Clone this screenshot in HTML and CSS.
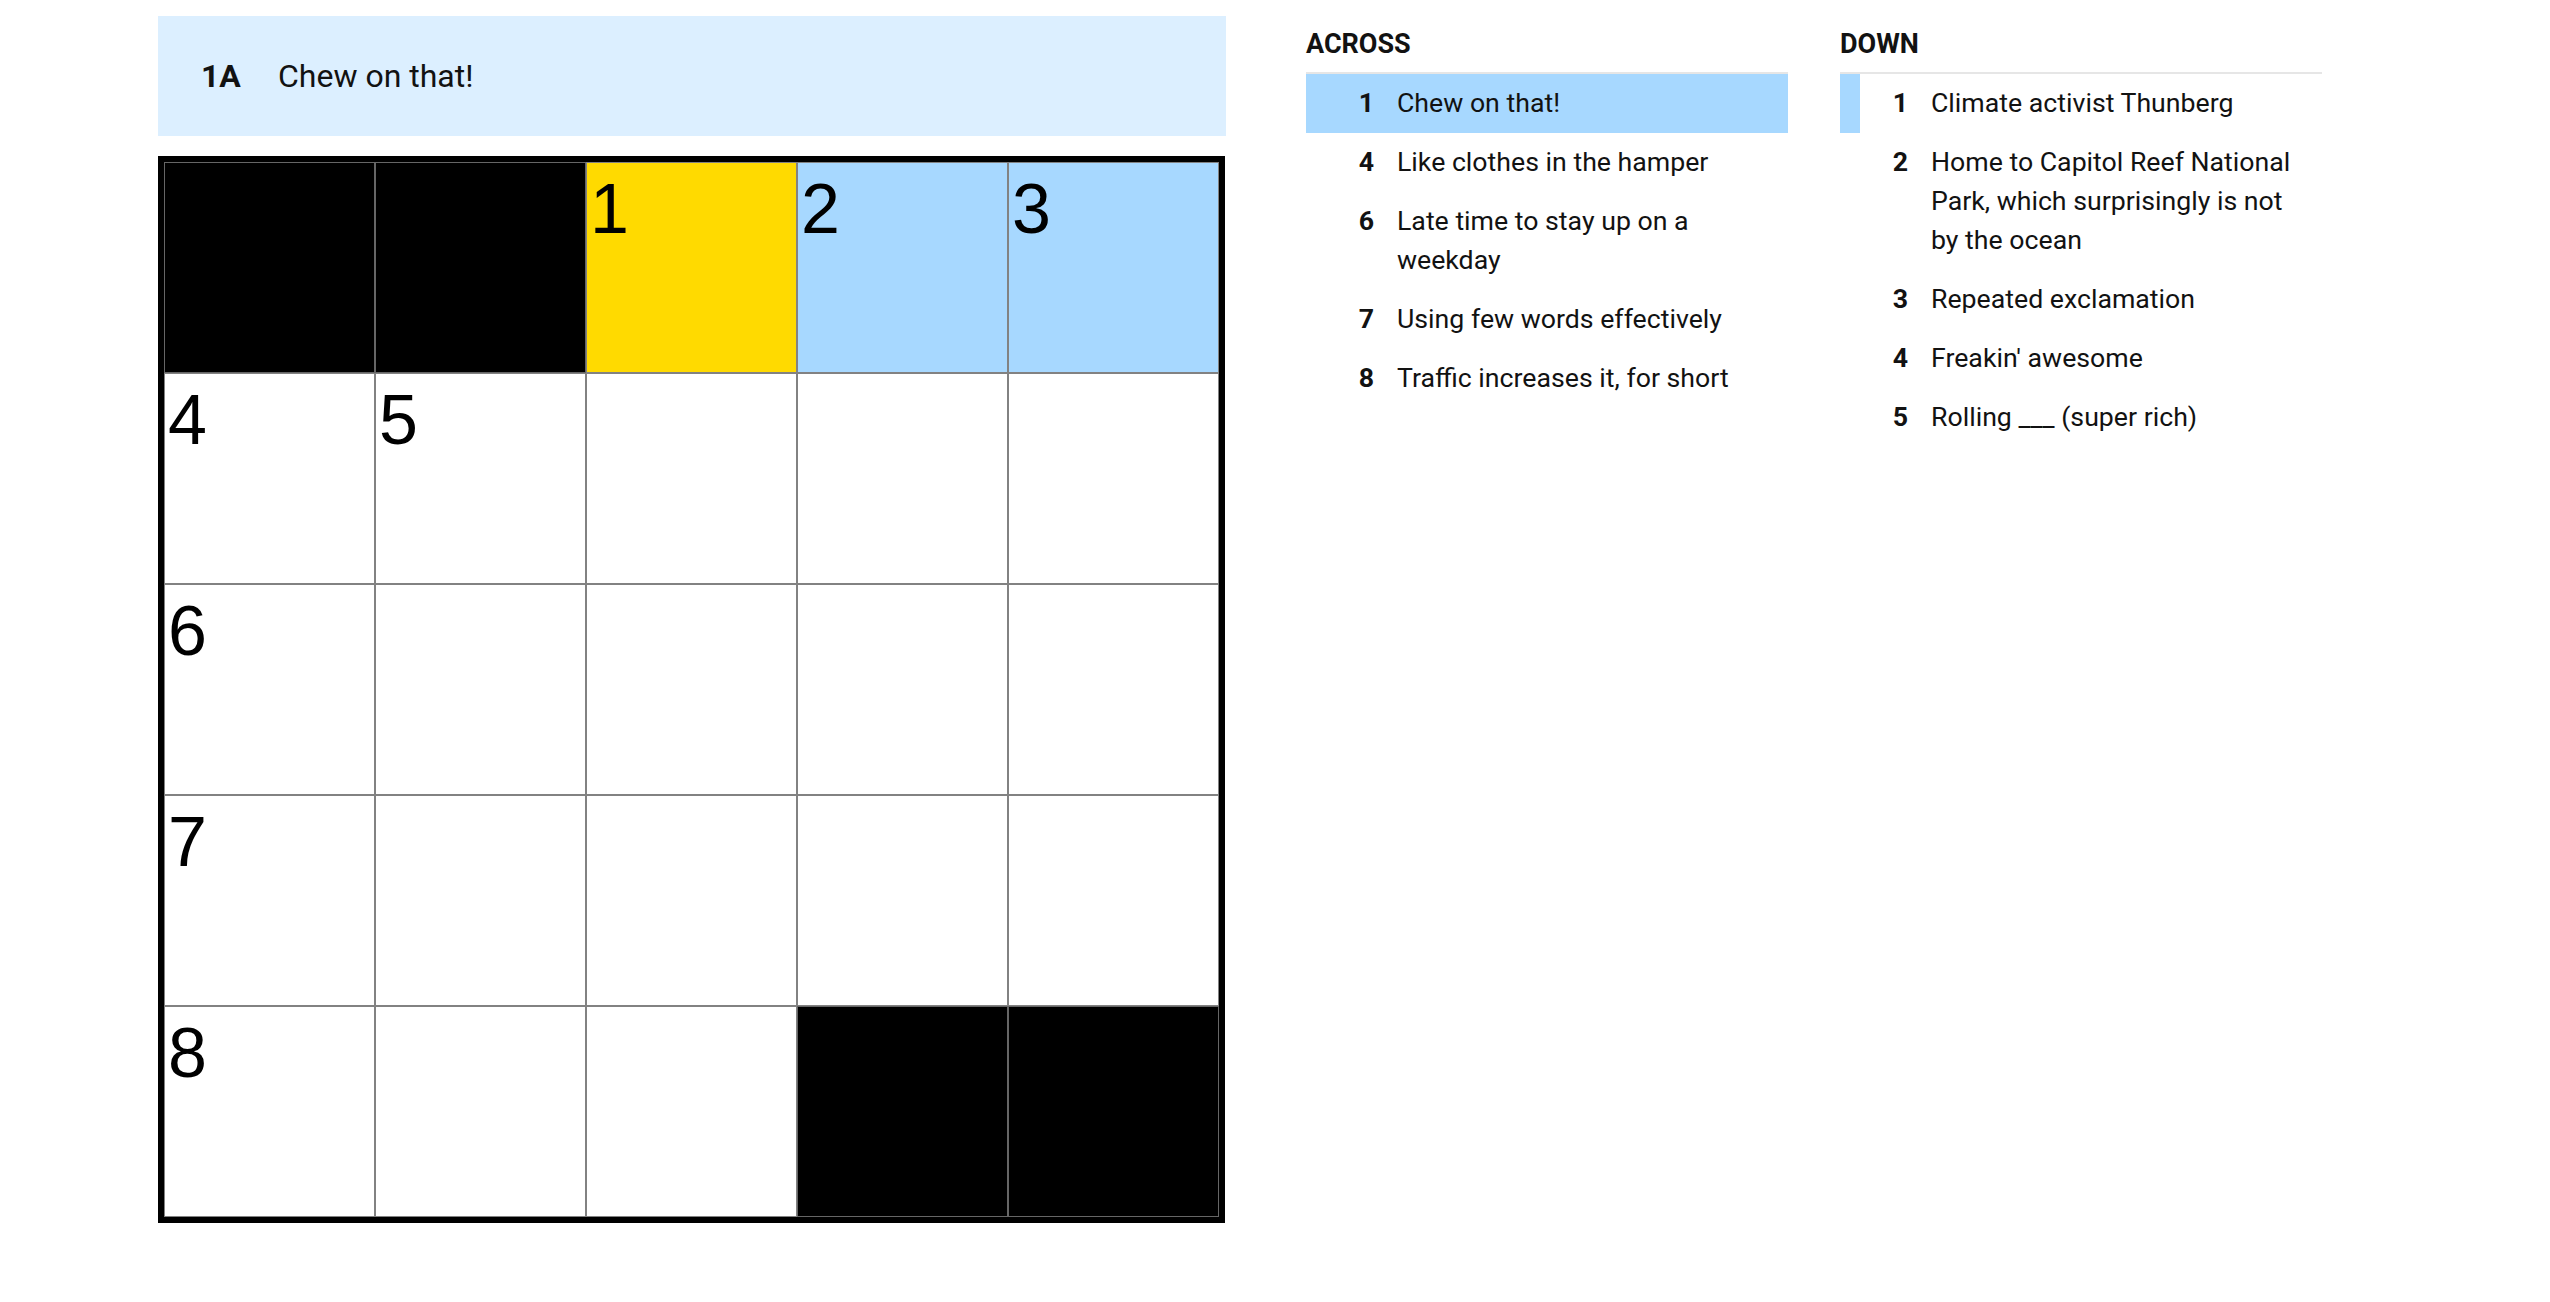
FILE: index.html
```html
<!DOCTYPE html>
<html lang="en">
<head>
<meta charset="utf-8">
<title>The Mini Crossword</title>
<link rel="stylesheet" href="styles.css">
</head>
<body>
<main class="page">
  <section class="board">
    <div class="clue-bar">
      <span class="clue-bar-num">1A</span>
      <span class="clue-bar-text">Chew on that!</span>
    </div>
    <div class="grid">
      <div class="cell block"></div>
      <div class="cell block"></div>
      <div class="cell selected"><span class="cell-num">1</span></div>
      <div class="cell word"><span class="cell-num">2</span></div>
      <div class="cell word"><span class="cell-num">3</span></div>

      <div class="cell"><span class="cell-num">4</span></div>
      <div class="cell"><span class="cell-num">5</span></div>
      <div class="cell"></div>
      <div class="cell"></div>
      <div class="cell"></div>

      <div class="cell"><span class="cell-num">6</span></div>
      <div class="cell"></div>
      <div class="cell"></div>
      <div class="cell"></div>
      <div class="cell"></div>

      <div class="cell"><span class="cell-num">7</span></div>
      <div class="cell"></div>
      <div class="cell"></div>
      <div class="cell"></div>
      <div class="cell"></div>

      <div class="cell"><span class="cell-num">8</span></div>
      <div class="cell"></div>
      <div class="cell"></div>
      <div class="cell block"></div>
      <div class="cell block"></div>
    </div>
  </section>

  <section class="lists">
    <div class="clue-list">
      <h3 class="list-title">ACROSS</h3>
      <ol class="clues">
        <li class="clue active"><span class="clue-num">1</span><span class="clue-text">Chew on that!</span></li>
        <li class="clue"><span class="clue-num">4</span><span class="clue-text">Like clothes in the hamper</span></li>
        <li class="clue"><span class="clue-num">6</span><span class="clue-text">Late time to stay up on a weekday</span></li>
        <li class="clue"><span class="clue-num">7</span><span class="clue-text">Using few words effectively</span></li>
        <li class="clue"><span class="clue-num">8</span><span class="clue-text">Traffic increases it, for short</span></li>
      </ol>
    </div>
    <div class="clue-list">
      <h3 class="list-title">DOWN</h3>
      <ol class="clues">
        <li class="clue related"><span class="clue-num">1</span><span class="clue-text">Climate activist Thunberg</span></li>
        <li class="clue"><span class="clue-num">2</span><span class="clue-text">Home to Capitol Reef National Park, which surprisingly is not by the ocean</span></li>
        <li class="clue"><span class="clue-num">3</span><span class="clue-text">Repeated exclamation</span></li>
        <li class="clue"><span class="clue-num">4</span><span class="clue-text">Freakin' awesome</span></li>
        <li class="clue"><span class="clue-num">5</span><span class="clue-text">Rolling ___ (super rich)</span></li>
      </ol>
    </div>
  </section>
</main>
</body>
</html>
```

FILE: styles.css
```css
* {
  box-sizing: border-box;
}

html, body {
  margin: 0;
  padding: 0;
  background: #ffffff;
}

body {
  font-family: Roboto, "Liberation Sans", Arial, sans-serif;
  color: #121212;
}

.page {
  display: flex;
  align-items: flex-start;
  gap: 80px;
  padding: 16px 0 0 158px;
}

.board {
  display: flex;
  flex-direction: column;
  gap: 20px;
  width: 1068px;
}

.clue-bar {
  height: 120px;
  background: #dcefff;
  display: flex;
  align-items: center;
  padding-left: 43px;
  font-size: 32px;
}

.clue-bar-num {
  font-weight: 700;
  width: 77px;
}

.grid {
  display: grid;
  grid-template-columns: repeat(5, 211px);
  grid-auto-rows: 211px;
  width: 1067px;
  border: 6px solid #000;
}

.cell {
  border: 1px solid #828282;
  background: #fff;
  padding: 11px 0 0 3px;
}

.cell.block {
  background: #000;
  border-color: #666;
}

.cell.selected {
  background: #ffda00;
}

.cell.word {
  background: #a7d8ff;
}

.cell-num {
  display: block;
  font-family: "Liberation Sans", Arial, sans-serif;
  font-size: 70px;
  line-height: 70px;
  color: #000;
}

.lists {
  display: flex;
  gap: 52px;
  padding-top: 13px;
}

.clue-list {
  width: 482px;
}

.list-title {
  margin: 0 0 12px 0;
  font-size: 27px;
  line-height: 31px;
  font-weight: 700;
}

.clues {
  list-style: none;
  margin: 0;
  padding: 0;
  border-top: 2px solid #e6e6e6;
}

.clue {
  display: flex;
  align-items: flex-start;
  padding: 10px 20px 10px 0;
  border-left: 20px solid transparent;
  font-size: 26.7px;
  line-height: 39px;
}

.clue.active {
  background: #a7d8ff;
}

.clue.related {
  border-left-color: #a7d8ff;
}

.clue-num {
  flex: 0 0 48px;
  text-align: right;
  font-weight: 700;
  margin-right: 23px;
}

.clue-text {
  flex: 1 1 auto;
}
```
